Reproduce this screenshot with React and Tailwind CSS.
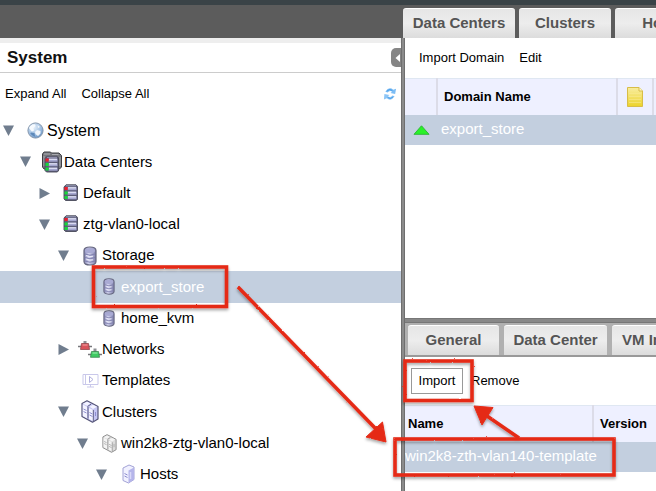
import React from "react";

function Globe() {
  return (
    <svg width="17" height="17" viewBox="0 0 17 17" aria-hidden="true">
      <defs>
        <radialGradient id="globe" cx="0.4" cy="0.3" r="0.8">
          <stop offset="0" stopColor="#e4effa" />
          <stop offset="0.6" stopColor="#9dbde0" />
          <stop offset="1" stopColor="#4f7fb5" />
        </radialGradient>
      </defs>
      <circle cx="8.5" cy="8.5" r="7.6" fill="url(#globe)" stroke="#8798ad" />
      <path d="M2 6 Q4 2 8 2.4 L8.600 4 L6.500 6 L7 8.500 L5 9.500 L3.500 8 Z" fill="#f6fafe" />
      <path d="M10 8 L13.500 9 L13.500 11.500 L11 14 L8.500 12 L8 10 Z M10.500 3 L13 5 L11 6 Z" fill="#f1f6fb" />
      <path d="M4 10.500 L7.500 11 L8 14.500 Q4.500 13.500 3.300 11.500 Z" fill="#3e70a8" opacity="0.7" />
    </svg>
  );
}

function RackShape() {
  return (
    <>
      <path d="M3 0.800 H13 L14.500 2.500 V15.500 L13 16.500 H2.500 L1 15 V3 Z" fill="#5c5d78" stroke="#4a4b5a" strokeWidth="0.900" />
      <path d="M3 1.800 H13" stroke="#9b9cb8" />
      {[3.2, 7.7, 12.2].map((y) => (
        <g key={y}>
          <rect x="4.500" y={y} width="9" height="3" fill="#a5a7cf" />
          <rect x="5" y={y} width="8" height="1.200" fill="#e0e1f4" />
        </g>
      ))}
      <rect x="1.500" y="3" width="3.200" height="3" fill="#ee1c2b" />
      <rect x="1.500" y="7.500" width="3.200" height="3" fill="#17d83a" />
      <rect x="1.500" y="12" width="3.200" height="3" fill="#17d83a" />
    </>
  );
}

function Rack() {
  return (
    <svg width="16" height="18" viewBox="0 0 16 18" aria-hidden="true">
      <RackShape />
    </svg>
  );
}

function Racks() {
  return (
    <svg width="22" height="22" viewBox="0 0 22 22" aria-hidden="true">
      <path d="M1.500 3 L3 1 H9.500 L10.500 2 H18 L20.500 4.500 V16 L18.500 18 H3 L1.500 16 Z" fill="#77787e" stroke="#3d3e43" />
      <path d="M3 3 H9 M11 3.500 H17.500 M3 5 V15 M19 6 V15" stroke="#a9aab0" />
      <g transform="translate(3 4.500)">
        <RackShape />
      </g>
    </svg>
  );
}

function Disk({ large }) {
  return (
    <svg width={large ? 14 : 12} height={large ? 20 : 17} viewBox="0 0 14 20" aria-hidden="true">
      <defs>
        <linearGradient id="disk" x1="0" x2="1">
          <stop offset="0" stopColor="#8485b2" />
          <stop offset="0.4" stopColor="#d4d5f0" />
          <stop offset="1" stopColor="#7a7ba8" />
        </linearGradient>
      </defs>
      <path d="M1 4.500 Q1 1 7 1 Q13 1 13 4.500 V15.500 Q13 19 7 19 Q1 19 1 15.500 Z" fill="url(#disk)" stroke="#65667f" strokeWidth="1.200" />
      <ellipse cx="7" cy="4.500" rx="5" ry="2.600" fill="#a9aad4" />
      <path d="M2 8 Q7 10.500 12 8 M2 11.500 Q7 14 12 11.500 M2 15 Q7 17.500 12 15" fill="none" stroke="#7b7cab" strokeWidth="0.900" />
      <path d="M3 9.500 Q7 11.500 10 10.300 M3 13 Q7 15 10 13.800" fill="none" stroke="#f0f0fc" strokeWidth="0.900" />
    </svg>
  );
}

function Network() {
  return (
    <svg className="shrink-0" width="24" height="18" viewBox="0 0 24 18" aria-hidden="true">
      <path d="M0 6.500 H14 M10 14.500 H24" stroke="#77787c" strokeWidth="1.500" />
      <rect x="5.500" y="1" width="3" height="3.500" fill="#8e8f94" />
      <path d="M3.500 3.500 H10.500 L11.500 9.500 H2.500 Z" fill="#d9545b" stroke="#94484c" strokeWidth="0.800" />
      <path d="M4.500 5 H9.500" stroke="#f0a5a8" />
      <rect x="15.500" y="8.500" width="3" height="3.500" fill="#8e8f94" />
      <path d="M13.500 11.500 H20.500 L21.500 17.300 H12.500 Z" fill="#3ecb62" stroke="#3c8650" strokeWidth="0.800" />
      <path d="M14.500 13 H19.500" stroke="#a3efb5" />
    </svg>
  );
}

function Template() {
  return (
    <svg width="17" height="15" viewBox="0 0 17 15" fill="none" stroke="#c9c8ea" aria-hidden="true">
      <path d="M1 1.500 H16 V11.500 H1 Z M3.500 1.500 V11.500 M5 14 H12 M8.500 11.500 V14" />
      <path d="M7.500 3.500 V9.500 L11 6.500 Z" stroke="#b2b1df" />
    </svg>
  );
}

function Cluster({ muted }) {
  const edge = muted ? "#8f8f8f" : "#555577";
  const light = muted ? "#f4f4f4" : "#f3f3ff";
  const mid = muted ? "#dcdcdc" : "#c6c6f3";
  const line = muted ? "#a8a8a8" : "#8f8fd0";
  return (
    <svg width={muted ? 15 : 18} height={muted ? 19 : 23} viewBox="0 0 18 23" strokeLinejoin="round" aria-hidden="true">
      <path d="M1 3.500 L6 0.800 L10.500 3 L17 6.500 V19 L11.500 22.200 L1 16.500 Z" fill={mid} stroke={edge} strokeWidth="1.200" />
      <path d="M1.800 4.500 L6 6.800 V18.300 L1.800 16 Z" fill={light} />
      <path d="M8 8 L12 10 V21 L8 19 Z" fill={light} />
      <path d="M2 3.800 L6 1.700 L9.500 3.500 L6 5.800 Z M8.500 6.800 L12 4.800 L16 6.800 L12 9 Z" fill={light} />
      <path d="M6.500 6.500 L10 4.200 M7 7 V18.500 M12.300 10 V21" stroke={edge} strokeWidth="0.900" />
      <path d="M2.500 9 L5.500 10.500 M2.500 11.500 L5.500 13 M8.500 12.500 L11.500 14 M8.500 15 L11.500 16.500 M14.500 12 V16" stroke={line} strokeWidth="1" />
    </svg>
  );
}

function Host() {
  return (
    <svg width="13" height="20" viewBox="0 0 13 20" strokeLinejoin="round" aria-hidden="true">
      <path d="M1 4 L7 1 L12 3 V15.500 L6.500 19 L1 16.500 Z" fill="#f1f1ff" stroke="#a3a3d6" />
      <path d="M6.500 6.500 L12 3.500 V15.500 L6.500 19 Z" fill="#b5b5ea" />
      <path d="M8.500 8 V15" stroke="#d9d9f8" strokeWidth="1.500" />
      <path d="M2.500 9.500 L5.500 11 M2.500 12 L5.500 13.500" stroke="#8c8ccd" />
    </svg>
  );
}

function Arrow({ open }) {
  return (
    <svg width="11" height="11" viewBox="0 0 11 11" fill="#707d8e" aria-hidden="true">
      <path d={open ? "M0 0.500 H11 L5.500 11 Z" : "M0.500 0 V11 L11 5.500 Z"} />
    </svg>
  );
}

const tree = [
  { label: "System", pad: "pl-[3px]", open: true, icon: <Globe />, strong: true },
  { label: "Data Centers", pad: "pl-5", open: true, icon: <Racks /> },
  { label: "Default", pad: "pl-[39px]", open: false, icon: <Rack /> },
  { label: "ztg-vlan0-local", pad: "pl-[39px]", open: true, icon: <Rack /> },
  { label: "Storage", pad: "pl-[58px]", open: true, icon: <Disk large /> },
  { label: "export_store", pad: "pl-[77px]", icon: <Disk />, selected: true },
  { label: "home_kvm", pad: "pl-[77px]", icon: <Disk /> },
  { label: "Networks", pad: "pl-[58px]", open: false, icon: <Network /> },
  { label: "Templates", pad: "pl-[58px]", icon: <Template /> },
  { label: "Clusters", pad: "pl-[58px]", open: true, icon: <Cluster /> },
  { label: "win2k8-ztg-vlan0-local", pad: "pl-[77px]", open: true, icon: <Cluster muted /> },
  { label: "Hosts", pad: "pl-24", open: true, icon: <Host /> },
];

function TreeRow({ item }) {
  return (
    <li
      role="treeitem"
      aria-selected={!!item.selected}
      aria-expanded={item.open}
      className={`flex items-center whitespace-nowrap ${item.pad} ${item.selected ? "bg-[#c3cfdf] text-white" : ""}`}
    >
      <span className="mr-[9px] flex w-[11px] shrink-0">{item.open !== undefined && <Arrow open={item.open} />}</span>
      <span className="flex w-6 shrink-0 items-center justify-center">{item.icon}</span>
      <span className={item.strong ? "text-[16px]" : "text-[15px]"}>{item.label}</span>
    </li>
  );
}

function Sidebar() {
  return (
    <aside className="flex w-[401px] shrink-0 flex-col border-t-[5px] border-[#eeeeee] bg-white">
      <div className="flex h-[30px] shrink-0 items-center justify-between border-b border-[#cccccc] pl-[7px]">
        <h1 className="text-[17px] font-bold text-[#111]">System</h1>
        <button aria-label="Collapse panel" className="flex h-[19px] w-[10px] items-center justify-end rounded-l-[5px] bg-[#858585]">
          <svg width="6" height="8" viewBox="0 0 6 8" fill="#fff" aria-hidden="true">
            <path d="M5 0 V8 L0.500 4 Z" />
          </svg>
        </button>
      </div>
      <div className="flex h-[42px] shrink-0 items-center gap-[15px] pl-[5px] pr-1 text-[13px]">
        <button>Expand All</button>
        <button>Collapse All</button>
        <button aria-label="Refresh" className="ml-auto">
          <svg width="14" height="14" viewBox="0 0 15 14" aria-hidden="true">
            <path d="M2.500 4.500 Q6.500 -1.500 11 2.500 L14 1.500 L13 7 L8 6 L9.800 4.500 Q7 2.500 5 5.500 Z" fill="#7dbdf5" />
            <path d="M12.500 9.500 Q8.500 15.500 4 11.500 L1 13 L1.500 7 L7 8 L5.200 9.500 Q8 11.500 10 8.500 Z" fill="#8cc5f6" />
            <path d="M4 4 Q7 0.800 10 3.200 M11 10 Q8 13.200 5 10.800" fill="none" stroke="#4299e6" />
          </svg>
        </button>
      </div>
      <ul role="tree" className="grid h-[375px] shrink-0 grid-rows-12">
        {tree.map((item) => (
          <TreeRow key={item.label} item={item} />
        ))}
      </ul>
    </aside>
  );
}

function Tab({ className, children }) {
  return (
    <button
      className={`h-[30px] shrink-0 rounded-t-[3px] border-t border-white bg-linear-to-b from-[#e6e6e6] via-[#ededed] to-[#dcdcdc] text-[15px] font-bold whitespace-nowrap text-[#555] ${className}`}
    >
      {children}
    </button>
  );
}

function Note() {
  return (
    <svg className="mx-auto" width="16" height="20" viewBox="0 0 16 20" role="img" aria-label="Note">
      <defs>
        <linearGradient id="note" x2="0" y2="1">
          <stop offset="0" stopColor="#f8eda0" />
          <stop offset="1" stopColor="#ecd32b" />
        </linearGradient>
      </defs>
      <path d="M0.500 0.500 H12 L15.500 4 V19.500 H0.500 Z" fill="url(#note)" stroke="#d8bd48" />
      <path d="M12 0.500 V4 H15.500" fill="#fff8cb" stroke="#d8bd48" />
      <path d="M2 6.500 H14 M2 9.500 H14 M2 12.500 H14 M2 15.500 H14" stroke="#f8ea91" strokeOpacity="0.600" />
    </svg>
  );
}

function DomainTable() {
  return (
    <table className="w-full table-fixed border-collapse text-left">
      <colgroup>
        <col className="w-8" />
        <col className="w-[180px]" />
        <col className="w-9" />
        <col />
      </colgroup>
      <thead>
        <tr className="h-9 border-t border-[#dfe7f2] bg-[#eef0ff] text-[13px]">
          <th className="border-r-2 border-[#dcdce8]" aria-label="Status" />
          <th className="border-r-2 border-[#dcdce8] pl-[6px]">Domain Name</th>
          <th className="border-r-2 border-[#dcdce8]">
            <Note />
          </th>
          <th />
        </tr>
      </thead>
      <tbody>
        <tr className="h-[30px] bg-[#c3cfdf] text-[15px] text-white">
          <td>
            <svg className="mx-auto" width="17" height="10" viewBox="0 0 17 10" role="img" aria-label="Up">
              <path d="M8.500 0.800 L16 9.300 H1 Z" fill="#29f229" stroke="#31b93a" />
            </svg>
          </td>
          <td className="pl-1">export_store</td>
          <td />
          <td />
        </tr>
      </tbody>
    </table>
  );
}

function TemplateTable() {
  return (
    <table className="w-full table-fixed border-collapse text-left">
      <colgroup>
        <col className="w-[188px]" />
        <col />
      </colgroup>
      <thead>
        <tr className="h-9 border-t border-[#dfe7f2] bg-[#eef0ff] text-[13px]">
          <th className="border-r-2 border-[#dcdce8] pl-[3px]">Name</th>
          <th className="pl-[6px]">Version</th>
        </tr>
      </thead>
      <tbody>
        <tr className="h-[30px] bg-[#c3cfdf] text-[15px] text-white">
          <td>
            <div className="w-48 overflow-hidden whitespace-nowrap">win2k8-zth-vlan140-template</div>
          </td>
          <td />
        </tr>
      </tbody>
    </table>
  );
}

function Annotations() {
  return (
    <svg className="pointer-events-none absolute top-0 left-0" width="656" height="491" viewBox="0 0 656 491" aria-hidden="true">
      <defs>
        <filter id="chalk" filterUnits="userSpaceOnUse" x="0" y="0" width="656" height="491">
          <feTurbulence type="fractalNoise" baseFrequency="0.5" numOctaves="2" seed="4" result="n" />
          <feDisplacementMap in="SourceGraphic" in2="n" scale="2" xChannelSelector="R" yChannelSelector="G" result="d" />
          <feDropShadow in="d" dx="0" dy="2" stdDeviation="1.5" floodColor="#000" floodOpacity="0.35" />
        </filter>
      </defs>
      <g filter="url(#chalk)" fill="none" stroke="#e52b18" strokeWidth="3.6">
        <rect x="93.500" y="267" width="133" height="39.500" />
        <rect x="405" y="361" width="67" height="39.500" />
        <rect x="395" y="439" width="219" height="36" />
        <path d="M238 287 L376 429 M519 438 L487 416" />
        <path d="M386 442 L382.500 422 L366 437 Z M474 406 L493 407.500 L482 425 Z" fill="#e52b18" strokeWidth="1" />
      </g>
    </svg>
  );
}

export default function App() {
  return (
    <div className="relative flex h-screen flex-col overflow-hidden bg-white font-['Liberation_Sans',Arial,sans-serif] text-black">
      <div className="h-[5px] shrink-0 bg-[#3a4347]" />
      <nav className="flex h-[33px] shrink-0 items-end gap-1 bg-[#5c5c5c] pl-[403px]">
        <Tab className="w-28">Data Centers</Tab>
        <Tab className="w-[92px]">Clusters</Tab>
        <Tab className="w-24">Hosts</Tab>
      </nav>
      <div className="flex min-h-0 flex-1">
        <Sidebar />
        <div className="w-1 shrink-0 border-x border-[#6f6f6f] bg-[#8b8b8b]" />
        <main className="flex min-w-0 flex-1 flex-col">
          <section className="h-[280px] shrink-0">
            <div className="flex h-10 items-center gap-[15px] pl-[14px] text-[13px]">
              <button>Import Domain</button>
              <button>Edit</button>
            </div>
            <DomainTable />
          </section>
          <div className="h-[5px] shrink-0 border-y border-[#777] bg-[#888]" />
          <nav className="flex h-[34px] shrink-0 items-end gap-[5px] border-b-2 border-[#999] bg-[#b0b0b0] pl-[3px]">
            <Tab className="w-[91px]">General</Tab>
            <Tab className="w-[103px]">Data Center</Tab>
            <Tab className="w-28 pl-[10px] text-left">VM Import</Tab>
          </nav>
          <section>
            <div className="flex h-12 items-center gap-2 pl-[6px] text-[13px]">
              <button className="h-[26px] w-[52px] border border-[#999] bg-white">Import</button>
              <button>Remove</button>
            </div>
            <TemplateTable />
          </section>
        </main>
      </div>
      <Annotations />
    </div>
  );
}
